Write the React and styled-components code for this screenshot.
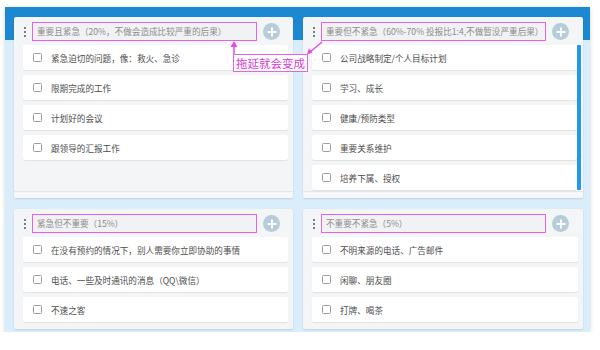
import React from 'react';
import styled, {createGlobalStyle} from 'styled-components';

const quadrants = [
    {
        title: '重要且紧急（20%，不做会造成比较严重的后果）',
        items: ['紧急迫切的问题，像：救火、急诊', '限期完成的工作', '计划好的会议', '跟领导的汇报工作'],
        footer: true
    },
    {
        title: '重要但不紧急（60%-70% 投报比1:4,不做暂没严重后果）',
        items: ['公司战略制定/个人目标计划', '学习、成长', '健康/预防类型', '重要关系维护', '培养下属、授权'],
        footer: true,
        scroll: true
    },
    {
        title: '紧急但不重要（15%）',
        items: ['在没有预约的情况下，别人需要你立即协助的事情', '电话、一些及时通讯的消息（QQ\\微信）', '不速之客']
    },
    {
        title: '不重要不紧急（5%）',
        items: ['不明来源的电话、广告邮件', '闲聊、朋友圈', '打牌、喝茶']
    }
]

const App = () => {
    return (
        <>
            <GlobalStyle/>
            <Frame>
                {quadrants.map((q, index) => (
                    <Panel key={index}>
                        <Header>
                            <Handle><i/><i/><i/></Handle>
                            <TitleBox>{q.title}</TitleBox>
                            <AddButton/>
                        </Header>
                        <Body $scroll={q.scroll}>
                            <List>
                                {q.items.map((item, i) => (
                                    <Card key={i}>
                                        <Check/>
                                        <span>{item}</span>
                                    </Card>
                                ))}
                            </List>
                            {q.scroll && <ScrollThumb/>}
                        </Body>
                        {q.footer && <Footer/>}
                    </Panel>
                ))}
                <Note>拖延就会变成</Note>
                <Arrows width="585" height="100" viewBox="0 0 585 100">
                    <line x1="229" y1="47" x2="229" y2="38" stroke="#e04fe0" strokeWidth="1.5"/>
                    <polygon points="229,34 225.5,40 232.5,40" fill="#e04fe0"/>
                    <line x1="317" y1="35" x2="305" y2="45" stroke="#e04fe0" strokeWidth="1.5"/>
                    <polygon points="302,47.5 307.6,45.6 303.8,41.5" fill="#e04fe0"/>
                </Arrows>
            </Frame>
        </>
    );
};

const GlobalStyle = createGlobalStyle`
  body {
    margin: 0;
    background: #fff;
    font-family: "Noto Sans CJK SC", "Noto Sans", sans-serif;
  }
`

const Frame = styled.div`
  position: relative;
  box-sizing: border-box;
  margin: 7px 0 0 5px;
  width: 585px;
  height: 325px;
  padding: 10px 7px 3px 9px;
  background: linear-gradient(#1c88d1 0, #1c88d1 33px, #daedfb 33px);
  box-shadow: 0 1px 4px rgba(0, 0, 0, 0.18);
  display: grid;
  grid-template-columns: 279px 280px;
  grid-template-rows: 181px 120px;
  column-gap: 10px;
  row-gap: 11px;
`

const Panel = styled.div`
  display: flex;
  flex-direction: column;
  background: #f4f5f7;
  border-radius: 2px;
  overflow: hidden;
  box-shadow: 0 1px 2px rgba(0, 0, 0, 0.12);
`

const Header = styled.div`
  display: flex;
  align-items: center;
  height: 19px;
  margin-top: 5px;
  padding-left: 10px;
  flex-shrink: 0;
`

const Handle = styled.div`
  display: flex;
  flex-direction: column;
  gap: 2px;
  width: 2px;
  margin-right: 6px;

  > i {
    display: block;
    width: 2px;
    height: 2px;
    border-radius: 50%;
    background: #555;
  }
`

const TitleBox = styled.div`
  box-sizing: border-box;
  width: 225px;
  height: 19px;
  border: 1px solid #e463e4;
  background: #f1f2f4;
  padding-left: 4px;
  font-size: 8.6px;
  line-height: 17px;
  color: #8c8c8c;
  white-space: nowrap;
  overflow: hidden;
`

const AddButton = styled.div`
  position: relative;
  width: 17px;
  height: 17px;
  margin-left: 6px;
  border-radius: 50%;
  background: #b7ccda;

  &::before, &::after {
    content: '';
    position: absolute;
    left: 50%;
    top: 50%;
    background: #fff;
    transform: translate(-50%, -50%);
  }

  &::before {
    width: 9px;
    height: 2px;
  }

  &::after {
    width: 2px;
    height: 9px;
  }
`

const Body = styled.div`
  display: flex;
  flex: 1;
  min-height: 0;
  margin-top: 4px;
  padding: 0 ${props => props.$scroll ? '2px' : '5px'} 0 9px;
`

const List = styled.div`
  flex: 1;
  display: flex;
  flex-direction: column;
  gap: 5px;
`

const ScrollThumb = styled.div`
  width: 4px;
  height: 145px;
  background: #2196f3;
  border-radius: 1px;
`

const Card = styled.div`
  display: flex;
  align-items: center;
  height: 25px;
  flex-shrink: 0;
  padding-left: 10px;
  background: #fff;
  border-radius: 2px;
  box-shadow: 0 1px 1px rgba(0, 0, 0, 0.08);
  font-size: 8.6px;
  color: #4d4d4d;
  white-space: nowrap;
`

const Check = styled.span`
  box-sizing: border-box;
  width: 9px;
  height: 9px;
  margin-right: 9px;
  border: 1px solid #9d9d9d;
  border-radius: 1.5px;
  background: #fff;
`

const Footer = styled.div`
  height: 6px;
  flex-shrink: 0;
  border-top: 1px solid #e4e6e9;
  background: #f6f7f8;
`

const Note = styled.div`
  position: absolute;
  left: 228px;
  top: 47px;
  box-sizing: border-box;
  height: 18px;
  padding: 0 2px;
  border: 1px solid #e463e4;
  background: rgba(255, 255, 255, 0.9);
  color: #d63ad6;
  font-size: 11.5px;
  line-height: 16px;
  white-space: nowrap;
`

const Arrows = styled.svg`
  position: absolute;
  left: 0;
  top: 0;
  pointer-events: none;
`

export default App;
